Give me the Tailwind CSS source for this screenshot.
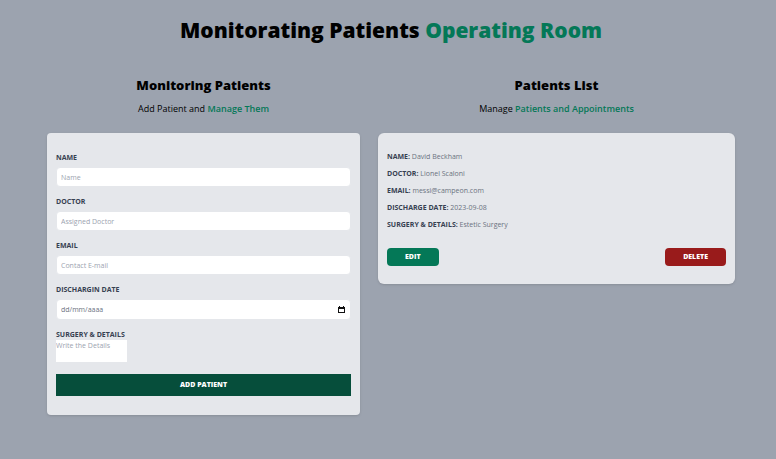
<!DOCTYPE html>
<html lang="en">
<head>
<meta charset="utf-8">
<meta name="viewport" content="width=device-width, initial-scale=1">
<title>Monitorating Patients</title>
<script src="https://cdn.jsdelivr.net/npm/@tailwindcss/browser@4"></script>
</head>
<body class="min-h-screen bg-[#9ca3af] font-['Open_Sans','Noto_Sans',sans-serif] text-black">
<div class="pt-4 pr-[41px] pb-6 pl-[47px]">
  <h1 class="text-center text-[21px] leading-7 font-extrabold">Monitorating Patients <span class="text-[#047857]">Operating Room</span></h1>
  <main class="mt-8 grid grid-cols-[313fr_357fr] items-start gap-[18px]">
    <section>
      <h2 class="text-center text-[13px] leading-[18px] font-extrabold">Monitoring Patients</h2>
      <p class="mt-2 text-center text-[9px] leading-[14px]">Add Patient and <span class="font-semibold text-[#047857]">Manage Them</span></p>
      <form class="mt-[17px] rounded-sm bg-[#e5e7eb] px-[9px] pt-5 pb-[19px] text-[7px] leading-[10px] shadow-sm">
        <div class="mb-2">
          <label for="name" class="block font-bold text-[#374151]">NAME</label>
          <input id="name" type="text" placeholder="Name" class="mt-1 block h-5 w-full rounded-sm border border-[#e5e7eb] bg-white px-1 placeholder:text-[#9ca3af]">
        </div>
        <div class="mt-[10px]">
          <label for="doctor" class="block font-bold text-[#374151]">DOCTOR</label>
          <input id="doctor" type="text" placeholder="Assigned Doctor" class="mt-1 block h-5 w-full rounded-sm border border-[#e5e7eb] bg-white px-1 placeholder:text-[#9ca3af]">
        </div>
        <div class="mt-[10px]">
          <label for="email" class="block font-bold text-[#374151]">EMAIL</label>
          <input id="email" type="email" placeholder="Contact E-mail" class="mt-1 block h-5 w-full rounded-sm border border-[#e5e7eb] bg-white px-1 placeholder:text-[#9ca3af]">
        </div>
        <div class="mt-[10px]">
          <label for="date" class="block font-bold text-[#374151]">DISCHARGIN DATE</label>
          <div class="mt-1 flex h-[21px] items-center rounded-sm border border-[#e5e7eb] bg-white pr-[5px] pl-1">
            <input id="date" type="text" placeholder="dd/mm/aaaa" class="min-w-0 flex-1 bg-transparent placeholder:text-[#6b7280]">
            <button type="button" aria-label="Open calendar" class="block">
              <svg class="block size-[7px]" viewBox="0 0 7 7" shape-rendering="crispEdges"><path fill="#111" fill-rule="evenodd" d="M1 0h1v1h3V0h1v1h1v6H0V1h1zM1 2.6v3.4h5V2.6z"/></svg>
            </button>
          </div>
        </div>
        <div class="mt-[10px] w-fit">
          <label for="details" class="block font-bold text-[#374151]">SURGERY &amp; DETAILS</label>
          <textarea id="details" placeholder="Write the Details" class="block h-[22px] w-[71px] resize-none bg-white pt-px placeholder:text-[#9ca3af]"></textarea>
        </div>
        <button type="submit" class="mt-3 block h-[22px] w-full bg-[#064e3b] text-center font-extrabold text-white">ADD PATIENT</button>
      </form>
    </section>
    <section>
      <h2 class="text-center text-[13px] leading-[18px] font-extrabold">Patients List</h2>
      <p class="mt-2 text-center text-[9px] leading-[14px]">Manage <span class="font-semibold text-[#047857]">Patients and Appointments</span></p>
      <article class="mt-[17px] rounded-md bg-[#e5e7eb] px-[9px] pt-[19px] pb-[18px] text-[7px] leading-[10px] shadow-sm">
        <div class="flex flex-col gap-[7px] font-bold text-[#374151]">
          <p>NAME: <span class="font-normal text-[#6b7280]">David Beckham</span></p>
          <p>DOCTOR: <span class="font-normal text-[#6b7280]">Lionel Scaloni</span></p>
          <p>EMAIL: <span class="font-normal text-[#6b7280]">messi@campeon.com</span></p>
          <p>DISCHARGE DATE: <span class="font-normal text-[#6b7280]">2023-09-08</span></p>
          <p>SURGERY &amp; DETAILS: <span class="font-normal text-[#6b7280]">Estetic Surgery</span></p>
        </div>
        <div class="mt-[18px] flex justify-between">
          <button type="button" class="h-[18px] rounded bg-[#047857] px-[18px] font-extrabold text-white">EDIT</button>
          <button type="button" class="h-[18px] rounded bg-[#991b1b] px-[18px] font-extrabold text-white">DELETE</button>
        </div>
      </article>
    </section>
  </main>
</div>
</body>
</html>
